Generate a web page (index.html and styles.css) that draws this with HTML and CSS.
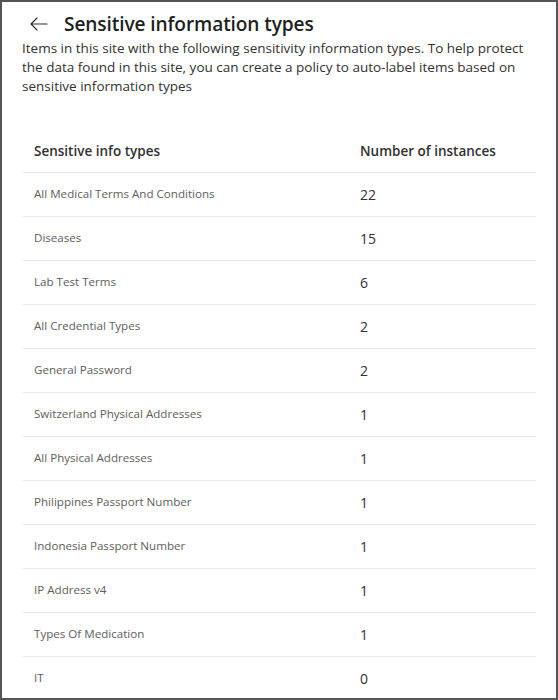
FILE: index.html
```html
<!DOCTYPE html>
<html>
<head>
<meta charset="utf-8">
<link rel="stylesheet" href="styles.css">
</head>
<body>
<div class="panel">
  <header class="head">
    <button class="back" aria-label="Back">
      <svg width="18" height="14" viewBox="0 0 18 14"><path d="M7 1 L1 7 L7 13 M1 7 H17" fill="none" stroke="#323130" stroke-width="1.2" stroke-linecap="round" stroke-linejoin="round"/></svg>
    </button>
    <h1 class="title">Sensitive information types</h1>
  </header>
  <p class="desc">Items in this site with the following sensitivity information types. To help protect the data found in this site, you can create a policy to auto-label items based on sensitive information types</p>
  <div class="table">
    <div class="row hrow"><div class="c1">Sensitive info types</div><div class="c2">Number of instances</div></div>
    <div class="row"><div class="c1">All Medical Terms And Conditions</div><div class="c2">22</div></div>
    <div class="row"><div class="c1">Diseases</div><div class="c2">15</div></div>
    <div class="row"><div class="c1">Lab Test Terms</div><div class="c2">6</div></div>
    <div class="row"><div class="c1">All Credential Types</div><div class="c2">2</div></div>
    <div class="row"><div class="c1">General Password</div><div class="c2">2</div></div>
    <div class="row"><div class="c1">Switzerland Physical Addresses</div><div class="c2">1</div></div>
    <div class="row"><div class="c1">All Physical Addresses</div><div class="c2">1</div></div>
    <div class="row"><div class="c1">Philippines Passport Number</div><div class="c2">1</div></div>
    <div class="row"><div class="c1">Indonesia Passport Number</div><div class="c2">1</div></div>
    <div class="row"><div class="c1">IP Address v4</div><div class="c2">1</div></div>
    <div class="row"><div class="c1">Types Of Medication</div><div class="c2">1</div></div>
    <div class="row"><div class="c1">IT</div><div class="c2">0</div></div>
  </div>
</div>
</body>
</html>
```
FILE: styles.css
```css
* { box-sizing: border-box; }
html, body { margin: 0; padding: 0; background: #fff; }
body { font-family: "Open Sans", "Noto Sans", sans-serif; color: #323130; }
.panel {
  width: 558px;
  height: 700px;
  border: 2px solid #555;
  overflow: hidden;
  padding: 0 20px 0 20px;
}
.head {
  display: flex;
  align-items: center;
  height: 32px;
  margin-top: 6px;
  margin-bottom: -1px;
}
.back {
  border: 0;
  background: none;
  padding: 0;
  margin: 0 16px 0 8px;
  width: 18px;
  height: 14px;
  display: flex;
}
.title {
  margin: 0;
  font-size: 19.1px;
  font-weight: 600;
  color: #201f1e;
  letter-spacing: -0.1px;
}
.desc {
  margin: 0;
  font-size: 13.5px;
  line-height: 19px;
  color: #323130;
}
.table { margin-top: 35px; }
.row {
  display: grid;
  grid-template-columns: 326px 1fr;
  height: 44px;
  align-items: center;
  border-bottom: 1px solid #edebe9;
}
.hrow { height: 42px; }
.c1, .c2 { padding-left: 12px; }
.hrow .c1, .hrow .c2 { font-size: 13.5px; font-weight: 600; color: #323130; padding-bottom: 2px; padding-top: 0; }
.c1 { font-size: 11.6px; color: #605e5c; padding-bottom: 3px; }
.c2 { font-size: 14px; color: #323130; padding-bottom: 0; }
```
